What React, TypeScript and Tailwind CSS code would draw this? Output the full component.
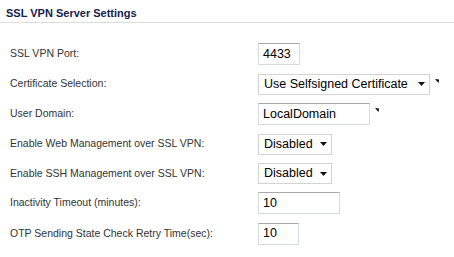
import React from "react";

type Row = {
  label: string;
  h: string;
  kind: "input" | "select";
  value: string;
  width: string;
  marker?: boolean;
};

const rows: Row[] = [
  { label: "SSL VPN Port:", h: "h-[30px]", kind: "input", value: "4433", width: "w-[42px]" },
  { label: "Certificate Selection:", h: "h-[30px]", kind: "select", value: "Use Selfsigned Certificate", width: "w-[172px]", marker: true },
  { label: "User Domain:", h: "h-[30px]", kind: "input", value: "LocalDomain", width: "w-[112px]", marker: true },
  { label: "Enable Web Management over SSL VPN:", h: "h-[30px]", kind: "select", value: "Disabled", width: "w-[74px]" },
  { label: "Enable SSH Management over SSL VPN:", h: "h-[29px]", kind: "select", value: "Disabled", width: "w-[74px]" },
  { label: "Inactivity Timeout (minutes):", h: "h-[30px]", kind: "input", value: "10", width: "w-[82px]" },
  { label: "OTP Sending State Check Retry Time(sec):", h: "h-[31px]", kind: "input", value: "10", width: "w-[41px]" },
];

function Marker() {
  return (
    <svg width="5" height="5" viewBox="0 0 5 5" className="self-start ml-[5px] mt-[5px]">
      <polygon points="0,0 4,0.5 3.5,4" fill="#000" />
    </svg>
  );
}

function Field({ row }: { row: Row }) {
  if (row.kind === "select") {
    return (
      <div
        className={`${row.width} h-[21px] flex items-center justify-between border border-[#d4d4d4] bg-white pl-[5px] pr-[4px] text-[12.5px] text-[#000] leading-none`}
      >
        <span>{row.value}</span>
        <svg width="7" height="4" viewBox="0 0 7 4">
          <polygon points="0,0 7,0 3.5,4" fill="#111" />
        </svg>
      </div>
    );
  }
  return (
    <div
      className={`${row.width} h-[22px] flex items-center border border-[#d5dbe3] border-t-[#a8a8a8] bg-white pl-[4px] text-[12.5px] text-[#000] leading-none`}
    >
      {row.value}
    </div>
  );
}

export default function App() {
  return (
    <div className="w-[454px] h-[257px] bg-white font-['Liberation_Sans',Arial,sans-serif] overflow-hidden">
      {/* Header */}
      <div className="h-[23px] border-b border-[#dcdcdc] pl-[6px] pt-[8px]">
        <span className="text-[11px] font-bold text-[#14224d] leading-none block">
          SSL VPN Server Settings
        </span>
      </div>

      {/* Rows */}
      <div className="flex flex-col pt-[16px]">
        {rows.map((row) => (
          <div key={row.label} className={`${row.h} flex items-center`}>
            <div className="w-[258px] pl-[10px] text-[10.5px] text-[#333]">{row.label}</div>
            <div className="flex items-center">
              <Field row={row} />
              {row.marker && <Marker />}
            </div>
          </div>
        ))}
      </div>
    </div>
  );
}
